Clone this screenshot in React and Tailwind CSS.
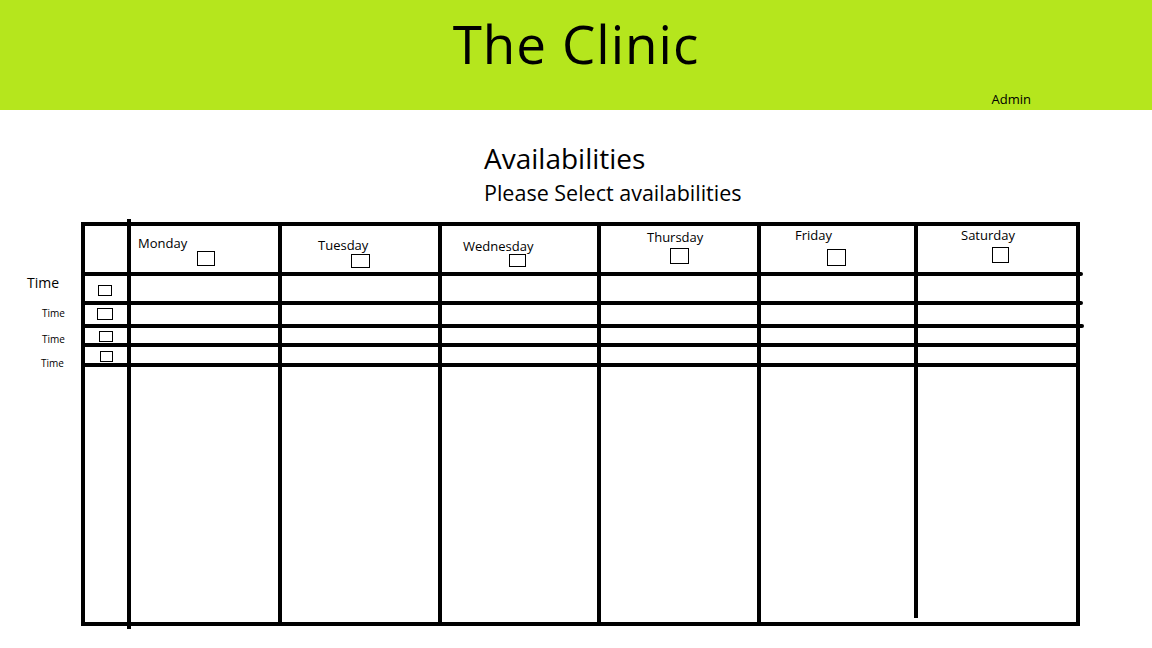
const days = [
  { name: 'Monday', pad: 'pl-[7px] pt-[9px]', box: 'ml-[59px] mt-0 w-[18px] h-[15px]' },
  { name: 'Tuesday', pad: 'pl-[36px] pt-[11px]', box: 'ml-[33px] mt-[1px] w-[19px] h-[14px]' },
  { name: 'Wednesday', pad: 'pl-[21px] pt-[12px]', box: 'ml-[46px] mt-0 w-[17px] h-[13px]' },
  { name: 'Thursday', pad: 'pl-[46px] pt-[3px]', box: 'ml-[23px] mt-[3px] w-[19px] h-[16px]' },
  { name: 'Friday', pad: 'pl-[34px] pt-[1px]', box: 'ml-[32px] mt-[6px] w-[19px] h-[17px]' },
  { name: 'Saturday', pad: 'pl-[43px] pt-[1px]', box: 'ml-[31px] mt-[4px] w-[17px] h-[16px]' },
];

// small boxes in the first column, one per time row
const slotBoxes = [
  'ml-[13px] mt-[9px] w-[14px] h-[11px]',
  'ml-[12px] mt-[3px] w-[16px] h-[12px]',
  'ml-[14px] mt-[3px] w-[14px] h-[11px]',
  'ml-[15px] mt-[4px] w-[13px] h-[11px]',
];

function Schedule() {
  return (
    <div className="relative">
      <div className="grid grid-cols-[42px_147px_156px_155px_156px_153px_158px] grid-rows-[46px_25px_19px_15px_16px_255px] gap-[4px] p-[4px] bg-black w-[999px]">
        <div className="bg-white" />
        {days.map((d) => (
          <div key={d.name} className={`bg-white ${d.pad}`}>
            <div className="text-[13px] leading-[16px] text-black">{d.name}</div>
            <div className={`border border-black ${d.box}`} />
          </div>
        ))}

        {slotBoxes.map((b, i) => (
          <>
            <div key={'s' + i} className="bg-white">
              <div className={`border border-black ${b}`} />
            </div>
            {days.map((d) => (
              <div key={d.name + i} className="bg-white" />
            ))}
          </>
        ))}

        <div className="bg-white" />
        {days.map((d) => (
          <div key={d.name + 'big'} className="bg-white" />
        ))}
      </div>

      {/* little sketch overshoots */}
      <div className="absolute left-[46px] top-[-3px] w-[4px] h-[3px] bg-black" />
      <div className="absolute left-[46px] bottom-[-3px] w-[4px] h-[3px] bg-black" />
      <div className="absolute left-[833px] bottom-[4px] w-[4px] h-[4px] bg-white" />
      <div className="absolute left-[999px] top-[50px] w-[3px] h-[4px] rounded-r-full bg-black" />
      <div className="absolute left-[999px] top-[79px] w-[3px] h-[4px] rounded-r-full bg-black" />
      <div className="absolute left-[999px] top-[102px] w-[4px] h-[4px] rounded-r-full bg-black" />
    </div>
  );
}

export default function App() {
  return (
    <div className="min-h-screen bg-white text-black font-['Open_Sans',sans-serif]">
      <header className="h-[110px] bg-[#b5e61d] flex flex-col">
        <h1 className="pt-[10px] text-center text-[53px] leading-[68px] tracking-[1px] font-normal">The Clinic</h1>
        <div className="flex justify-end pr-[121px] mt-[13px]">
          <span className="text-[13px] leading-[16px]">Admin</span>
        </div>
      </header>

      <div className="ml-[484px] mt-[33px]">
        <h2 className="text-[28px] leading-[30px]">Availabilities</h2>
        <p className="mt-[6px] text-[21.5px] leading-[28px]">Please Select availabilities</p>
      </div>

      <div className="flex items-start mt-[15px]">
        <div className="w-[81px] shrink-0 flex flex-col">
          <span className="mt-[52px] pl-[27px] text-[14px] leading-[18px]">Time</span>
          <span className="mt-[14px] pl-[42px] text-[10px] leading-[14px]">Time</span>
          <span className="mt-[12px] pl-[42px] text-[10px] leading-[14px]">Time</span>
          <span className="mt-[10px] pl-[41px] text-[10px] leading-[14px]">Time</span>
        </div>
        <Schedule />
      </div>
    </div>
  );
}
